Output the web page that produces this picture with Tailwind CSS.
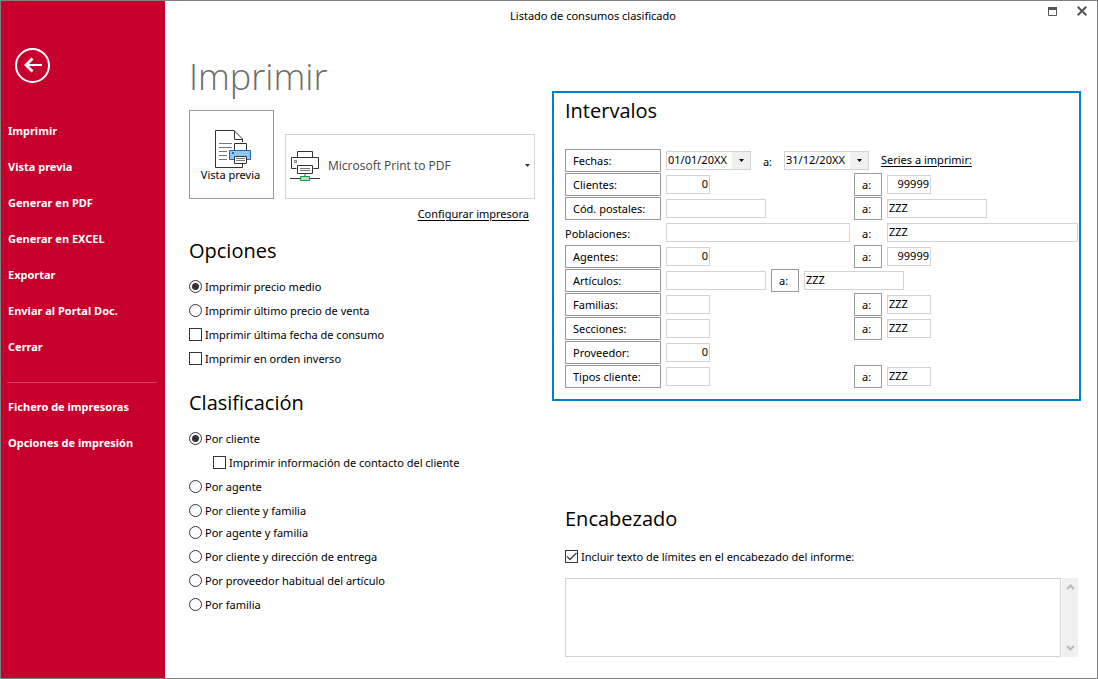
<!DOCTYPE html>
<html lang="es">
<head>
<meta charset="utf-8">
<meta name="viewport" content="width=device-width, initial-scale=1">
<title>Listado de consumos clasificado</title>
<script src="https://cdn.jsdelivr.net/npm/@tailwindcss/browser@4"></script>
</head>
<body class="bg-white font-['Noto_Sans','Open_Sans',sans-serif] text-[11px] leading-4 text-black">
<div class="flex min-h-screen border border-[#808080]">

  <aside class="w-41 shrink-0 bg-[#c8002d] font-bold text-white">
    <button type="button" aria-label="Volver" class="mt-[47px] ml-[14px] block size-9">
      <svg class="size-9" viewBox="0 0 36 36" fill="none" stroke="#fff">
        <circle cx="17.500" cy="17.500" r="16.500" stroke-width="2"/>
        <path d="M10 17H27" stroke-width="2"/>
        <path d="M17.500 10.500L11 17l6.500 6.500" stroke-width="2.800"/>
      </svg>
    </button>
    <nav class="mt-[29px] flex flex-col">
      <button type="button" class="h-9 px-[7px] text-left">Imprimir</button>
      <button type="button" class="h-9 px-[7px] text-left">Vista previa</button>
      <button type="button" class="h-9 px-[7px] text-left">Generar en PDF</button>
      <button type="button" class="h-9 px-[7px] text-left">Generar en EXCEL</button>
      <button type="button" class="h-9 px-[7px] text-left">Exportar</button>
      <button type="button" class="h-9 px-[7px] text-left">Enviar al Portal Doc.</button>
      <button type="button" class="h-9 px-[7px] text-left">Cerrar</button>
      <hr class="mx-[6px] mt-[17px] mb-[6px] w-[150px] border-[#d3405f]">
      <button type="button" class="h-9 px-[7px] text-left">Fichero de impresoras</button>
      <button type="button" class="h-9 px-[7px] text-left">Opciones de impresión</button>
    </nav>
  </aside>

  <main class="flex min-w-0 flex-1 flex-col">
    <header class="flex h-[30px] items-center">
      <p class="flex-1 pl-[74px] text-center">Listado de consumos clasificado</p>
      <div class="flex h-8 w-[150px] items-start justify-end gap-5 pt-[6px] pr-[10px]">
        <button type="button" aria-label="Maximizar" class="size-[10px]">
          <svg class="size-[10px]" viewBox="0 0 10 10"><path d="M1.500 1.500h8v8h-8z" fill="none" stroke="#555"/><path d="M1 1h9v3H1z" fill="#555"/></svg>
        </button>
        <button type="button" aria-label="Cerrar ventana" class="size-[10px]">
          <svg class="size-[10px]" viewBox="0 0 10 10"><path d="M.7.700l8.600 8.600M9.300.700L.7 9.300" stroke="#555" stroke-width="2"/></svg>
        </button>
      </div>
    </header>

    <div class="flex flex-1 pr-4 pl-6">
      <div class="w-[363px] shrink-0">
        <h1 class="mt-[22px] h-12 font-['Open_Sans',sans-serif] text-4xl leading-12 font-light text-[#6c6c6c]">Imprimir</h1>
        <div class="mt-[9px] flex items-end gap-[11px]">
          <button type="button" class="flex h-[89px] w-[85px] flex-col items-center border border-[#9a9a9a] pt-[18px]">
            <svg class="ml-[2px] h-10 w-9" viewBox="0 0 36 40" fill="none" stroke="#333">
              <path d="M27.500 13V10L19 1.500H.5v37h27V35" fill="#fff"/>
              <path d="M19.500 1.500V10.500h8.500"/>
              <path d="M4 14.500h13M4 18.500h13M4 22.500h8M4 26.500h8M4 30.500h8" stroke="#777"/>
              <path d="M19.500 21.500v-7h12v7" fill="#fff"/>
              <path d="M14.500 21.500h21v9h-21z" fill="#92c5f0" stroke="#1a6fb8"/>
              <path d="M17 24h2" stroke="#1a6fb8" stroke-width="2"/>
              <path d="M19.500 27.500h12v7h-12z" fill="#fff"/>
              <path d="M21 29.500h9M21 31.500h9" stroke="#777"/>
            </svg>
            <span class="-mt-[2px] pr-[2px]">Vista previa</span>
          </button>
          <div class="grid h-[65px] w-[250px] grid-cols-1 items-center">
            <select aria-label="Impresora" class="col-start-1 row-start-1 size-full appearance-none border border-[#d3d3d3] bg-white pb-[2px] pl-[42px] font-['Open_Sans',sans-serif] text-xs text-[#444]">
              <option>Microsoft Print to PDF</option>
            </select>
            <div class="pointer-events-none col-start-1 row-start-1 flex items-center justify-between pr-[5px] pb-[2px] pl-[5px]">
              <svg class="h-8 w-[30px]" viewBox="0 0 30 32" fill="none" stroke="#333">
                <path d="M7.500 7.500v-6h15v6"/>
                <path d="M6.500 18.500h-5v-11h27v11h-5"/>
                <path d="M4.500 10.500h2v2h-2z" stroke="#777"/>
                <path d="M7.500 15.500h15v8h-15z" fill="#fff"/>
                <path d="M10 18.500h10M10 20.500h10" stroke="#777"/>
                <path d="M15 24v2" stroke="#aaa" stroke-width="2"/>
                <path d="M0 28.500h30"/>
                <path d="M10.500 26.500h9v4h-9z" fill="#b5dfc0" stroke="#129b48"/>
              </svg>
              <svg class="h-[3px] w-[5px]" viewBox="0 0 5 3"><path d="M0 0h5L2.500 3z" fill="#333"/></svg>
            </div>
          </div>
        </div>
        <div class="mt-[7px] flex w-[340px] justify-end"><a href="#" class="underline underline-offset-2">Configurar impresora</a></div>

        <section>
          <h2 class="mt-[15px] h-7 font-['Open_Sans',sans-serif] text-xl leading-7">Opciones</h2>
          <div class="mt-[10px]">
            <label class="flex h-6 items-center gap-[3px]"><input type="radio" name="op" checked class="mb-[1px] size-[13px] appearance-none rounded-full border border-[#333] checked:bg-[radial-gradient(circle,#333_3px,transparent_4px)]">Imprimir precio medio</label>
            <label class="flex h-6 items-center gap-[3px]"><input type="radio" name="op" class="mb-[1px] size-[13px] appearance-none rounded-full border border-[#333] checked:bg-[radial-gradient(circle,#333_3px,transparent_4px)]">Imprimir último precio de venta</label>
            <label class="flex h-6 items-center gap-[3px]"><input type="checkbox" class="mb-[1px] size-[13px] appearance-none border border-[#333]">Imprimir última fecha de consumo</label>
            <label class="flex h-6 items-center gap-[3px]"><input type="checkbox" class="mb-[1px] size-[13px] appearance-none border border-[#333]">Imprimir en orden inverso</label>
          </div>
        </section>

        <section>
          <h2 class="mt-[18px] h-7 font-['Open_Sans',sans-serif] text-xl leading-7">Clasificación</h2>
          <div class="mt-[10px]">
            <label class="flex h-6 items-center gap-[3px]"><input type="radio" name="cl" checked class="mb-[1px] size-[13px] appearance-none rounded-full border border-[#333] checked:bg-[radial-gradient(circle,#333_3px,transparent_4px)]">Por cliente</label>
            <label class="ml-6 flex h-6 items-center gap-[3px]"><input type="checkbox" class="mb-[1px] size-[13px] appearance-none border border-[#333]">Imprimir información de contacto del cliente</label>
            <label class="flex h-6 items-center gap-[3px]"><input type="radio" name="cl" class="mb-[1px] size-[13px] appearance-none rounded-full border border-[#333] checked:bg-[radial-gradient(circle,#333_3px,transparent_4px)]">Por agente</label>
            <label class="flex h-6 items-center gap-[3px]"><input type="radio" name="cl" class="mb-[1px] size-[13px] appearance-none rounded-full border border-[#333] checked:bg-[radial-gradient(circle,#333_3px,transparent_4px)]">Por cliente y familia</label>
            <label class="-mt-[2px] flex h-6 items-center gap-[3px]"><input type="radio" name="cl" class="mb-[1px] size-[13px] appearance-none rounded-full border border-[#333] checked:bg-[radial-gradient(circle,#333_3px,transparent_4px)]">Por agente y familia</label>
            <label class="flex h-6 items-center gap-[3px]"><input type="radio" name="cl" class="mb-[1px] size-[13px] appearance-none rounded-full border border-[#333] checked:bg-[radial-gradient(circle,#333_3px,transparent_4px)]">Por cliente y dirección de entrega</label>
            <label class="flex h-6 items-center gap-[3px]"><input type="radio" name="cl" class="mb-[1px] size-[13px] appearance-none rounded-full border border-[#333] checked:bg-[radial-gradient(circle,#333_3px,transparent_4px)]">Por proveedor habitual del artículo</label>
            <label class="flex h-6 items-center gap-[3px]"><input type="radio" name="cl" class="mb-[1px] size-[13px] appearance-none rounded-full border border-[#333] checked:bg-[radial-gradient(circle,#333_3px,transparent_4px)]">Por familia</label>
          </div>
        </section>
      </div>

      <div class="min-w-0 flex-1 pt-[60px]">
        <section class="border-2 border-[#0082c8] pt-1 pr-[1px] pb-[11px] pl-[11px]">
          <h2 class="h-7 font-['Open_Sans',sans-serif] text-xl leading-7">Intervalos</h2>
          <div class="mt-6 flex flex-col gap-[1px]">
            <div class="flex h-[23px] items-center">
              <button type="button" class="h-full w-24 border border-[#9a9a9a] pl-[7px] text-left">Fechas:</button>
              <span class="ml-[5px] grid h-[19px] w-[85px] grid-cols-1">
                <select aria-label="Fecha inicial" class="col-start-1 row-start-1 size-full appearance-none border border-[#d3d3d3] bg-white pb-[1px] pl-[1px]"><option>01/01/20XX</option></select>
                <span class="pointer-events-none col-start-1 row-start-1 my-[1px] mr-[1px] flex w-[18px] items-center justify-center justify-self-end bg-[#f0f0f0]"><svg class="h-[3px] w-[5px]" viewBox="0 0 5 3"><path d="M0 0h5L2.500 3z" fill="#000"/></svg></span>
              </span>
              <span class="w-[33px] pt-[2px] text-center">a:</span>
              <span class="grid h-[19px] w-[85px] grid-cols-1">
                <select aria-label="Fecha final" class="col-start-1 row-start-1 size-full appearance-none border border-[#d3d3d3] bg-white pb-[1px] pl-[1px]"><option>31/12/20XX</option></select>
                <span class="pointer-events-none col-start-1 row-start-1 my-[1px] mr-[1px] flex w-[18px] items-center justify-center justify-self-end bg-[#f0f0f0]"><svg class="h-[3px] w-[5px]" viewBox="0 0 5 3"><path d="M0 0h5L2.500 3z" fill="#000"/></svg></span>
              </span>
              <a href="#" class="ml-3 pb-[1px] underline underline-offset-2">Series a imprimir:</a>
            </div>
            <div class="flex h-[23px] items-center">
              <button type="button" class="h-full w-24 border border-[#9a9a9a] pl-[7px] text-left">Clientes:</button>
              <span class="ml-[5px] flex w-[188px]"><input aria-label="Cliente inicial" value="0" class="h-[19px] w-11 border border-[#d3d3d3] px-[1px] pb-[2px] text-right"></span>
              <button type="button" class="h-full w-7 border border-[#9a9a9a] pl-[7px] text-left">a:</button>
              <input aria-label="Cliente final" value="99999" class="ml-[5px] h-[19px] w-11 border border-[#d3d3d3] px-[1px] pb-[2px] text-right">
            </div>
            <div class="flex h-[23px] items-center">
              <button type="button" class="h-full w-24 border border-[#9a9a9a] pl-[7px] text-left">Cód. postales:</button>
              <span class="ml-[5px] flex w-[188px]"><input aria-label="Código postal inicial" class="h-[19px] w-25 border border-[#d3d3d3] px-[1px] pb-[2px]"></span>
              <button type="button" class="h-full w-7 border border-[#9a9a9a] pl-[7px] text-left">a:</button>
              <input aria-label="Código postal final" value="ZZZ" class="ml-[5px] h-[19px] w-25 border border-[#d3d3d3] px-[1px] pb-[2px]">
            </div>
            <div class="flex h-[23px] items-center">
              <label for="pob1" class="w-24 pt-[2px]">Poblaciones:</label>
              <span class="ml-[5px] flex w-[188px]"><input id="pob1" class="h-[19px] w-46 border border-[#d3d3d3] px-[1px] pb-[2px]"></span>
              <label for="pob2" class="w-7 pt-[2px] pl-2">a:</label>
              <input id="pob2" value="ZZZ" class="ml-[5px] h-[19px] min-w-0 flex-1 border border-[#d3d3d3] px-[1px] pb-[2px]">
            </div>
            <div class="flex h-[23px] items-center">
              <button type="button" class="h-full w-24 border border-[#9a9a9a] pl-[7px] text-left">Agentes:</button>
              <span class="ml-[5px] flex w-[188px]"><input aria-label="Agente inicial" value="0" class="h-[19px] w-11 border border-[#d3d3d3] px-[1px] pb-[2px] text-right"></span>
              <button type="button" class="h-full w-7 border border-[#9a9a9a] pl-[7px] text-left">a:</button>
              <input aria-label="Agente final" value="99999" class="ml-[5px] h-[19px] w-11 border border-[#d3d3d3] px-[1px] pb-[2px] text-right">
            </div>
            <div class="flex h-[23px] items-center gap-[5px]">
              <button type="button" class="h-full w-24 border border-[#9a9a9a] pl-[7px] text-left">Artículos:</button>
              <input aria-label="Artículo inicial" class="h-[19px] w-25 border border-[#d3d3d3] px-[1px] pb-[2px]">
              <button type="button" class="h-full w-7 border border-[#9a9a9a] pl-[7px] text-left">a:</button>
              <input aria-label="Artículo final" value="ZZZ" class="h-[19px] w-25 border border-[#d3d3d3] px-[1px] pb-[2px]">
            </div>
            <div class="flex h-[23px] items-center">
              <button type="button" class="h-full w-24 border border-[#9a9a9a] pl-[7px] text-left">Familias:</button>
              <span class="ml-[5px] flex w-[188px]"><input aria-label="Familia inicial" class="h-[19px] w-11 border border-[#d3d3d3] px-[1px] pb-[2px]"></span>
              <button type="button" class="h-full w-7 border border-[#9a9a9a] pl-[7px] text-left">a:</button>
              <input aria-label="Familia final" value="ZZZ" class="ml-[5px] h-[19px] w-11 border border-[#d3d3d3] px-[1px] pb-[2px]">
            </div>
            <div class="flex h-[23px] items-center">
              <button type="button" class="h-full w-24 border border-[#9a9a9a] pl-[7px] text-left">Secciones:</button>
              <span class="ml-[5px] flex w-[188px]"><input aria-label="Sección inicial" class="h-[19px] w-11 border border-[#d3d3d3] px-[1px] pb-[2px]"></span>
              <button type="button" class="h-full w-7 border border-[#9a9a9a] pl-[7px] text-left">a:</button>
              <input aria-label="Sección final" value="ZZZ" class="ml-[5px] h-[19px] w-11 border border-[#d3d3d3] px-[1px] pb-[2px]">
            </div>
            <div class="flex h-[23px] items-center">
              <button type="button" class="h-full w-24 border border-[#9a9a9a] pl-[7px] text-left">Proveedor:</button>
              <input aria-label="Proveedor" value="0" class="ml-[5px] h-[19px] w-11 border border-[#d3d3d3] px-[1px] pb-[2px] text-right">
            </div>
            <div class="flex h-[23px] items-center">
              <button type="button" class="h-full w-24 border border-[#9a9a9a] pl-[7px] text-left">Tipos cliente:</button>
              <span class="ml-[5px] flex w-[188px]"><input aria-label="Tipo de cliente inicial" class="h-[19px] w-11 border border-[#d3d3d3] px-[1px] pb-[2px]"></span>
              <button type="button" class="h-full w-7 border border-[#9a9a9a] pl-[7px] text-left">a:</button>
              <input aria-label="Tipo de cliente final" value="ZZZ" class="ml-[5px] h-[19px] w-11 border border-[#d3d3d3] px-[1px] pb-[2px]">
            </div>
          </div>
        </section>

        <section class="mt-[104px] pr-[3px] pl-[13px]">
          <h2 class="h-7 font-['Open_Sans',sans-serif] text-xl leading-7">Encabezado</h2>
          <label class="mt-3 flex h-6 items-center gap-[3px]">
            <span class="mb-[1px] grid size-[13px]">
              <input type="checkbox" checked class="peer col-start-1 row-start-1 size-[13px] appearance-none border border-[#333]">
              <svg class="pointer-events-none invisible col-start-1 row-start-1 size-[13px] peer-checked:visible" viewBox="0 0 13 13"><path d="M2 6.500l3 3L11.500 3" fill="none" stroke="#444" stroke-width="1.400"/></svg>
            </span>Incluir texto de límites en el encabezado del informe:</label>
          <div class="mt-[9px] flex h-[79px] gap-[1px]">
            <textarea aria-label="Texto del encabezado" class="h-full min-w-0 flex-1 resize-none border border-[#d3d3d3]"></textarea>
            <div class="flex w-4 flex-col items-center justify-between bg-[#f0f0f0] py-[5px]">
              <svg class="h-2 w-[9px]" viewBox="0 0 9 8"><path d="M1.200 6L4.500 2.500 7.800 6" fill="none" stroke="#bbb" stroke-width="2"/></svg>
              <svg class="h-2 w-[9px]" viewBox="0 0 9 8"><path d="M1.200 2L4.500 5.500 7.800 2" fill="none" stroke="#bbb" stroke-width="2"/></svg>
            </div>
          </div>
        </section>
      </div>
    </div>
  </main>
</div>
</body>
</html>
